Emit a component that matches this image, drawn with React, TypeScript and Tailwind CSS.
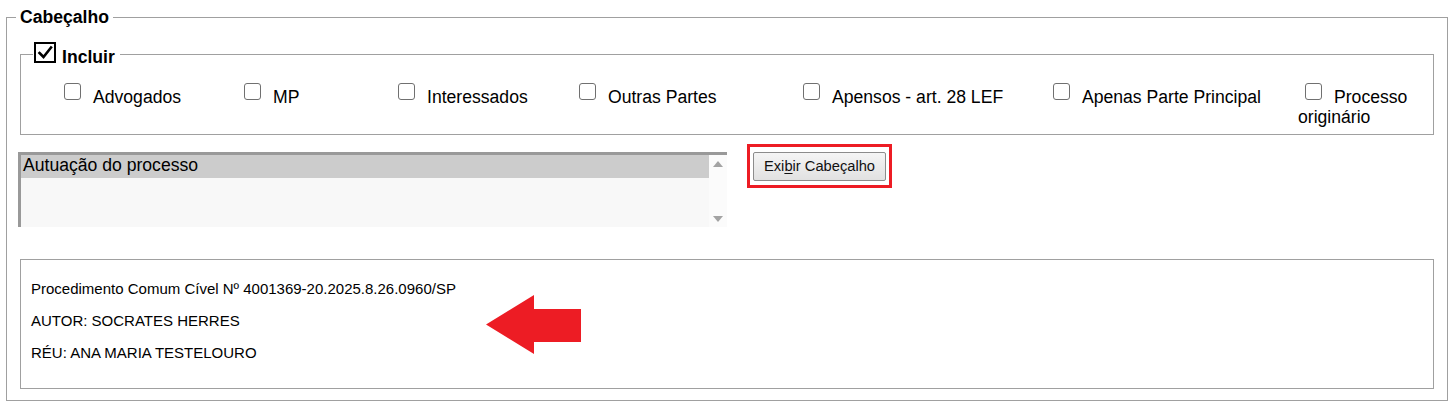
import React from 'react';

const opcoes = [
  { label: 'Advogados', w: 'w-[180px]' },
  { label: 'MP', w: 'w-[154px]' },
  { label: 'Interessados', w: 'w-[181px]' },
  { label: 'Outras Partes', w: 'w-[224px]' },
  { label: 'Apensos - art. 28 LEF', w: 'w-[250px]' },
  { label: 'Apenas Parte Principal', w: 'w-[252px]' },
  { label: 'Processo originário', w: 'w-[134px]' },
];

function Caixa() {
  return (
    <span className="inline-block w-[17px] h-[17px] ml-[7px] mr-[12px] mb-[3px] border border-[#707070] rounded-[3px] bg-white" />
  );
}

export default function App() {
  return (
    <div className="relative w-[1453px] h-[408px] bg-white text-black font-['Liberation_Sans',Arial,sans-serif] overflow-hidden">
      <fieldset className="mt-[7px] ml-[6px] w-[1442px] border border-[#a0a0a0] pl-[9px] pr-[9px] pt-[15px] pb-[11px]">
        <legend className="px-[4px] font-bold text-[17.6px] leading-[20px]">Cabeçalho</legend>

        {/* Incluir */}
        <fieldset className="ml-[4px] mr-[4px] border border-[#a0a0a0] pl-[12px] pt-[16px] pb-[7px]">
          <legend className="pl-[1px] pr-[5px] font-bold text-[17.6px] leading-[20px]">
            <span className="inline-block w-[22px] h-[21px] mr-[6px] border-2 border-black bg-white align-baseline">
              <svg viewBox="0 0 18 17" className="w-full h-full">
                <path d="M3.5 9 L7.5 13 L15 3.5" fill="none" stroke="#000" strokeWidth="2.6" strokeLinecap="square" />
              </svg>
            </span>
            Incluir
          </legend>
          <div className="flex pl-[24px]">
            {opcoes.map((o) => (
              <div key={o.label} className={`${o.w} shrink-0 text-[17.6px] leading-[20px]`}>
                <Caixa />
                {o.label}
              </div>
            ))}
          </div>
        </fieldset>

        {/* lista + botão */}
        <div className="flex items-start mt-[9px]">
          <div className="ml-[2px] mt-[8px] w-[709px] h-[75px] flex border-t-[3px] border-l-[3px] border-[#999999] bg-[#f8f8f8]">
            <div className="flex-1">
              <div className="h-[23px] bg-[#cccccc] px-[2px] text-[17.6px] leading-[20px]">Autuação do processo</div>
            </div>
            <div className="w-[18px] bg-[#fbfbfb] flex flex-col items-center justify-between pt-[6px] pb-[5px]">
              <svg width="10" height="6" viewBox="0 0 10 6"><path d="M0 6 L5 0 L10 6 Z" fill="#a3a3a3" /></svg>
              <svg width="10" height="6" viewBox="0 0 10 6"><path d="M0 0 L5 6 L10 0 Z" fill="#a3a3a3" /></svg>
            </div>
          </div>
          <div className="ml-[20px] border-[3px] border-[#ED1C24] px-[3px] pt-[5px] pb-[4px]">
            <button className="w-[133px] h-[29px] border border-[#8c8c8c] rounded-[2px] bg-linear-to-b from-[#f5f5f5] to-[#e1e1e1] text-[14.7px] text-[#111] leading-none">
              Exi<span className="underline underline-offset-2">b</span>ir Cabeçalho
            </button>
          </div>
        </div>

        {/* texto do cabeçalho */}
        <div className="mt-[32px] ml-[4px] mr-[4px] border border-[#a0a0a0] pl-[10px] pt-[20px] pb-[26px] text-[15px] leading-[18px] space-y-[14px]">
          <p>Procedimento Comum Cível Nº 4001369-20.2025.8.26.0960/SP</p>
          <p>AUTOR: SOCRATES HERRES</p>
          <p>RÉU: ANA MARIA TESTELOURO</p>
        </div>
      </fieldset>

      {/* seta de destaque */}
      <svg className="absolute left-[486px] top-[295px]" width="96" height="60" viewBox="0 0 96 60">
        <polygon points="0,29.5 48,0 48,14 95,14 95,47 48,47 48,59" fill="#ED1C24" />
      </svg>
    </div>
  );
}
